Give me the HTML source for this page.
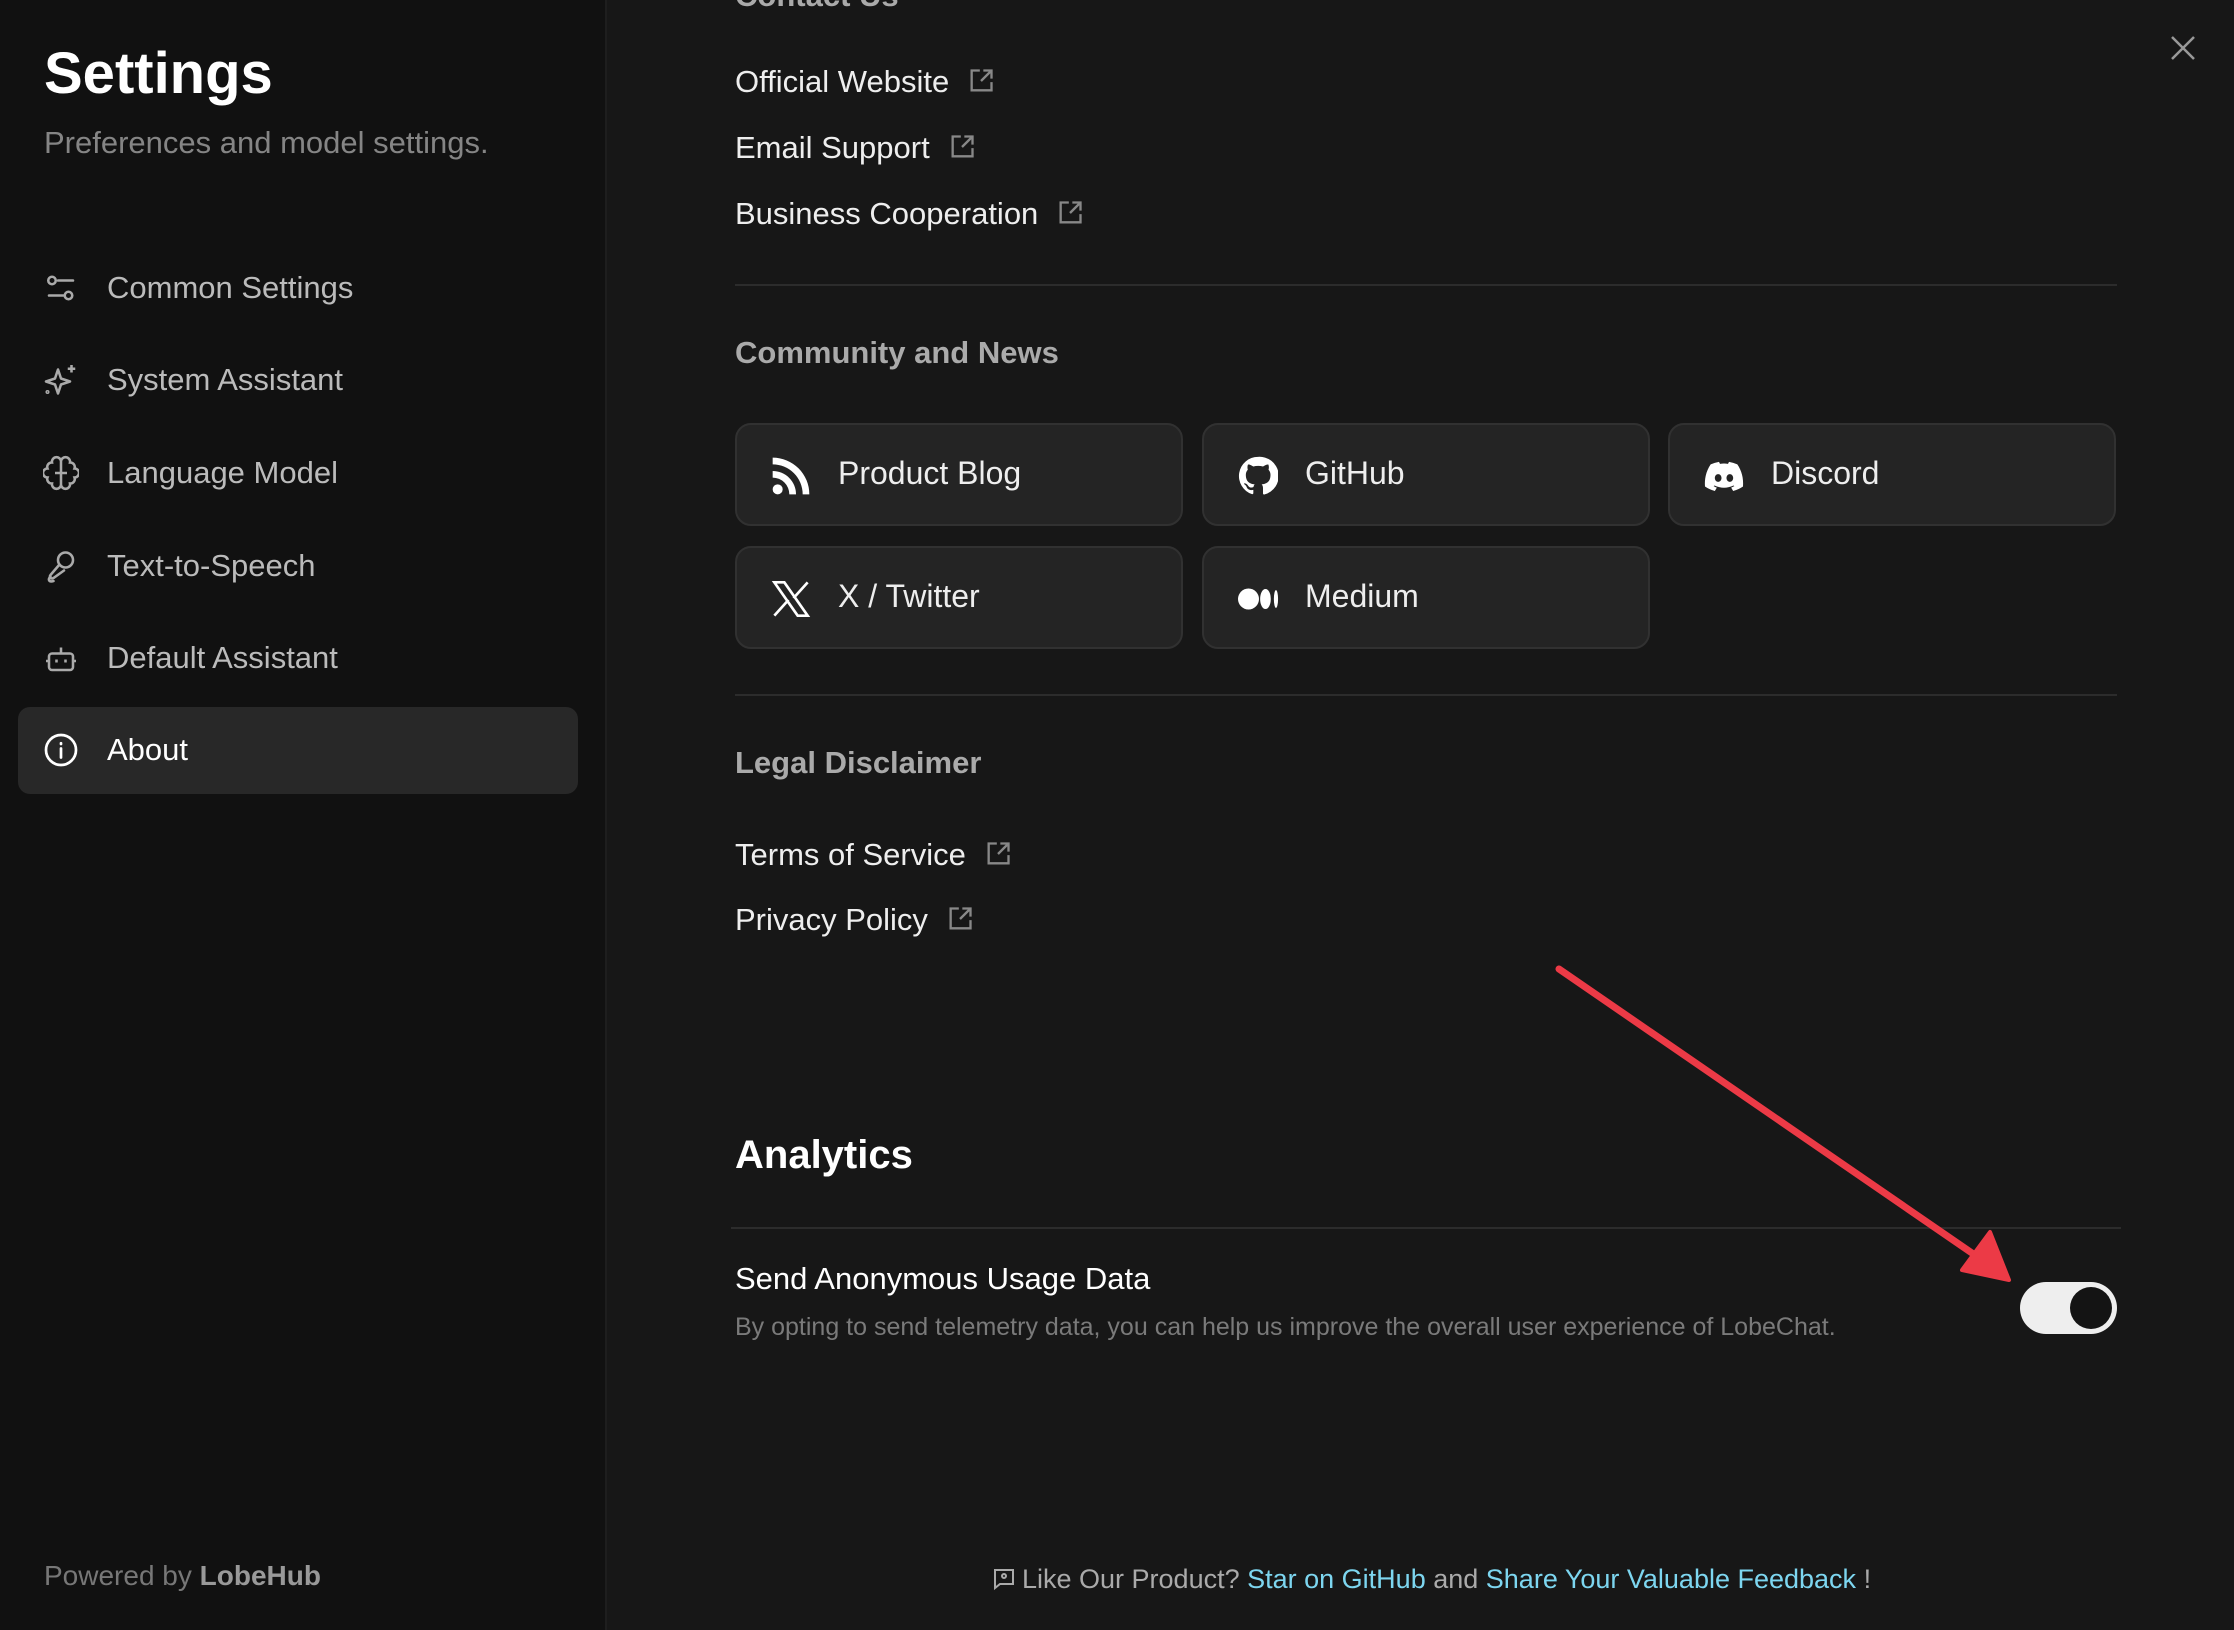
<!DOCTYPE html>
<html><head><meta charset="utf-8"><style>
*{margin:0;padding:0;box-sizing:border-box}
body{width:2234px;height:1630px;background:#171717;font-family:"Liberation Sans",sans-serif;position:relative;overflow:hidden;color:#eee}
.a{position:absolute;white-space:nowrap}
#side{position:absolute;left:0;top:0;width:607px;height:1630px;background:#111;border-right:2px solid #1e1e1e}
.nav{position:absolute;left:107px;font-size:31px;color:#bbb;line-height:40px}
.ni{position:absolute;left:43px;width:36px;height:36px}
.lnk{font-size:31px;color:#eee;line-height:40px}
.ext{display:inline-block;vertical-align:middle;margin-left:18px;margin-top:-6px}
.h{font-size:31px;font-weight:bold;color:#aaa}
.div{position:absolute;left:735px;width:1382px;height:2px;background:#2c2c2c}
.btn{position:absolute;width:448px;height:103px;background:#242424;border:2px solid #313131;border-radius:16px}
.btn svg{position:absolute;left:34px;top:31px}
.btn span{position:absolute;left:101px;top:30px;font-size:32px;color:#eee}
</style></head><body>
<div id="side"></div>
<div class="a" style="left:44px;top:40px;font-size:58px;font-weight:bold;color:#fff">Settings</div>
<div class="a" style="left:44px;top:125px;font-size:31px;color:#858585">Preferences and model settings.</div>

<svg class="ni" style="top:270px" viewBox="0 0 24 24" fill="none" stroke="#aaa" stroke-width="1.7" stroke-linecap="round"><circle cx="6" cy="7" r="2.5"/><path d="M10 7h10M4 17h10"/><circle cx="17" cy="17" r="2.5"/></svg>
<div class="nav a" style="top:268px">Common Settings</div>
<svg class="ni" style="top:362px" viewBox="0 0 24 24" fill="none" stroke="#aaa" stroke-width="1.7" stroke-linejoin="round"><path d="M10 5l2 6 6 2-6 2-2 6-2-6-6-2 6-2z"/><path d="M19 2v5M16.5 4.5h5"/><circle cx="3" cy="20" r=".5"/></svg>
<div class="nav a" style="top:360px">System Assistant</div>
<svg class="ni" style="top:455px" viewBox="0 0 24 24" fill="none" stroke="#aaa" stroke-width="1.7"><path d="M12 4a3 3 0 0 0-6 1 3 3 0 0 0-3 4 3 3 0 0 0 0 6 3 3 0 0 0 3 4 3 3 0 0 0 6 1V4zM12 4a3 3 0 0 1 6 1 3 3 0 0 1 3 4 3 3 0 0 1 0 6 3 3 0 0 1-3 4 3 3 0 0 1-6 1"/><path d="M12 12h-4M12 12h4"/></svg>
<div class="nav a" style="top:453px">Language Model</div>
<svg class="ni" style="top:548px" viewBox="0 0 24 24" fill="none" stroke="#aaa" stroke-width="1.7" stroke-linecap="round"><circle cx="15" cy="8" r="5"/><path d="M11 11l-6 7c-1 1 0 3 2 2l7-5M5 19c-2 2-1 4 2 3"/></svg>
<div class="nav a" style="top:546px">Text-to-Speech</div>
<svg class="ni" style="top:640px" viewBox="0 0 24 24" fill="none" stroke="#aaa" stroke-width="1.7"><rect x="4" y="9" width="16" height="11" rx="2"/><path d="M12 9V5M2 14h2M20 14h2M9 13v2M15 13v2"/></svg>
<div class="nav a" style="top:638px">Default Assistant</div>
<div class="a" style="left:18px;top:707px;width:560px;height:87px;background:#282828;border-radius:12px"></div>
<svg class="ni" style="top:732px" viewBox="0 0 24 24" fill="none" stroke="#fff" stroke-width="1.8" stroke-linecap="round"><circle cx="12" cy="12" r="10"/><path d="M12 11v6M12 7.5v.5"/></svg>
<div class="nav a" style="top:730px;color:#fff">About</div>
<div class="a" style="left:44px;top:1560px;font-size:28px;color:#777">Powered by <b style="color:#999">LobeHub</b></div>

<svg class="a" style="left:2170px;top:35px" width="26" height="26" viewBox="0 0 26 26" stroke="#999" stroke-width="2.5"><path d="M2 2l22 22M24 2L2 24"/></svg>

<div class="a h" style="left:735px;top:-22px;color:#aaa">Contact Us</div>
<div class="a lnk" style="left:735px;top:62px">Official Website<svg class="ext" width="28" height="28" viewBox="0 0 24 24" fill="none" stroke="#888" stroke-width="2"><path d="M11 3H4v17h17v-7M14 3h7v7M21 3l-9 9"/></svg></div>
<div class="a lnk" style="left:735px;top:128px">Email Support<svg class="ext" width="28" height="28" viewBox="0 0 24 24" fill="none" stroke="#888" stroke-width="2"><path d="M11 3H4v17h17v-7M14 3h7v7M21 3l-9 9"/></svg></div>
<div class="a lnk" style="left:735px;top:194px">Business Cooperation<svg class="ext" width="28" height="28" viewBox="0 0 24 24" fill="none" stroke="#888" stroke-width="2"><path d="M11 3H4v17h17v-7M14 3h7v7M21 3l-9 9"/></svg></div>
<div class="div" style="top:284px"></div>
<div class="a h" style="left:735px;top:335px">Community and News</div>

<div class="btn" style="left:735px;top:423px"><svg width="40" height="40" viewBox="0 0 24 24" fill="#fff"><circle cx="4" cy="20" r="3"/><path d="M1 9a14 14 0 0 1 14 14h-4A10 10 0 0 0 1 13zM1 1a22 22 0 0 1 22 22h-4A18 18 0 0 0 1 5z"/></svg><span>Product Blog</span></div>
<div class="btn" style="left:1202px;top:423px"><svg width="40" height="40" viewBox="0 0 24 24" fill="#fff"><path d="M12 .5a11.5 11.5 0 0 0-3.6 22.4c.6.1.8-.3.8-.6v-2c-3.2.7-3.9-1.5-3.9-1.5-.5-1.3-1.3-1.7-1.3-1.7-1-.7.1-.7.1-.7 1.2.1 1.8 1.2 1.8 1.2 1 1.8 2.7 1.3 3.4 1 .1-.8.4-1.3.7-1.6-2.6-.3-5.3-1.3-5.3-5.7 0-1.3.5-2.3 1.2-3.1-.1-.3-.5-1.5.1-3.1 0 0 1-.3 3.2 1.2a11 11 0 0 1 5.8 0c2.2-1.5 3.2-1.2 3.2-1.2.6 1.6.2 2.8.1 3.1.7.8 1.2 1.8 1.2 3.1 0 4.4-2.7 5.4-5.3 5.7.4.4.8 1.1.8 2.2v3.3c0 .3.2.7.8.6A11.5 11.5 0 0 0 12 .5z"/></svg><span>GitHub</span></div>
<div class="btn" style="left:1668px;top:423px"><svg width="40" height="40" viewBox="0 0 24 24" fill="#fff"><path d="M20 5a19 19 0 0 0-5-1.5l-.6 1.2a17 17 0 0 0-4.8 0L9 3.5A19 19 0 0 0 4 5C1 9.5.3 14 .6 18.3A19 19 0 0 0 6.5 21l1.2-2a12 12 0 0 1-1.9-.9l.5-.4a13.5 13.5 0 0 0 11.4 0l.5.4-1.9.9 1.2 2a19 19 0 0 0 5.9-2.7C23.8 13.3 22.6 8.8 20 5zM8.5 15.5c-1.1 0-2-1-2-2.3s.9-2.3 2-2.3 2 1 2 2.3-.9 2.3-2 2.3zm7 0c-1.1 0-2-1-2-2.3s.9-2.3 2-2.3 2 1 2 2.3-.9 2.3-2 2.3z"/></svg><span>Discord</span></div>
<div class="btn" style="left:735px;top:546px"><svg width="40" height="40" viewBox="0 0 24 24" fill="none" stroke="#fff" stroke-width="1.6"><path d="M2 2h6l14 20h-6zM22 2L13.5 11.5M2 22l8.5-9.5"/></svg><span>X / Twitter</span></div>
<div class="btn" style="left:1202px;top:546px"><svg width="42" height="40" viewBox="0 0 26 24" fill="#fff"><ellipse cx="6.5" cy="12" rx="6.5" ry="6.5"/><ellipse cx="17" cy="12" rx="3.3" ry="6.2"/><ellipse cx="23.5" cy="12" rx="1.3" ry="5.5"/></svg><span>Medium</span></div>

<div class="div" style="top:694px"></div>
<div class="a h" style="left:735px;top:745px">Legal Disclaimer</div>
<div class="a lnk" style="left:735px;top:835px">Terms of Service<svg class="ext" width="28" height="28" viewBox="0 0 24 24" fill="none" stroke="#888" stroke-width="2"><path d="M11 3H4v17h17v-7M14 3h7v7M21 3l-9 9"/></svg></div>
<div class="a lnk" style="left:735px;top:900px">Privacy Policy<svg class="ext" width="28" height="28" viewBox="0 0 24 24" fill="none" stroke="#888" stroke-width="2"><path d="M11 3H4v17h17v-7M14 3h7v7M21 3l-9 9"/></svg></div>

<div class="a" style="left:735px;top:1133px;font-size:40px;font-weight:bold;color:#fff">Analytics</div>
<div class="a" style="left:731px;top:1227px;width:1390px;height:2px;background:#2c2c2c"></div>
<div class="a" style="left:735px;top:1261px;font-size:31px;color:#fff">Send Anonymous Usage Data</div>
<div class="a" style="left:735px;top:1313px;font-size:25px;color:#7a7a7a">By opting to send telemetry data, you can help us improve the overall user experience of LobeChat.</div>
<div class="a" style="left:2020px;top:1282px;width:97px;height:52px;background:#eee;border-radius:26px"><div style="position:absolute;right:5px;top:5px;width:42px;height:42px;border-radius:50%;background:#141414"></div></div>

<svg class="a" style="left:0;top:0" width="2234" height="1630"><path d="M1559 969L1985 1262" stroke="#ec3a46" stroke-width="7" stroke-linecap="round"/><path d="M2009 1280L1962 1270 1990 1232z" fill="#ec3a46" stroke="#ec3a46" stroke-width="4" stroke-linejoin="round"/></svg>

<div class="a" style="left:992px;top:1564px;font-size:27px;color:#aaa"><svg width="24" height="26" viewBox="0 0 24 24" fill="none" stroke="#aaa" stroke-width="2" style="vertical-align:-4px;margin-right:6px"><path d="M3 3h18v14H8l-5 4z"/><circle cx="12" cy="9" r="2"/></svg>Like Our Product? <span style="color:#7dd6f0">Star on GitHub</span> and <span style="color:#7dd6f0">Share Your Valuable Feedback</span> !</div>
</body></html>
